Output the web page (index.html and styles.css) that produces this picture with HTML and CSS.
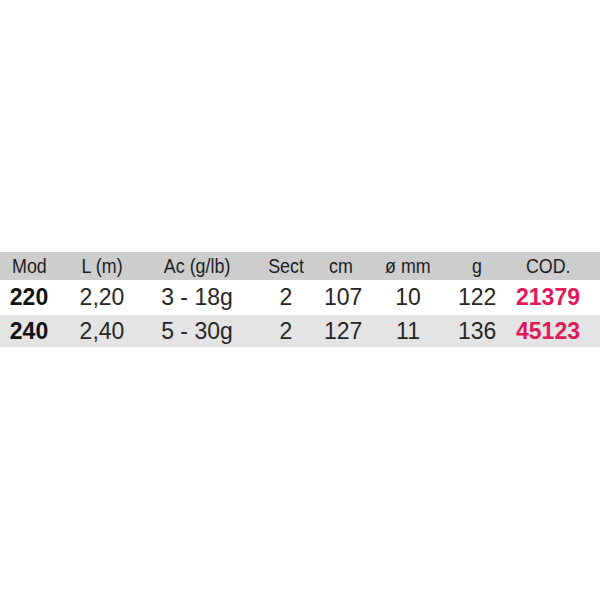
FILE: index.html
```html
<!DOCTYPE html>
<html>
<head>
<meta charset="utf-8">
<link rel="stylesheet" href="styles.css">
</head>
<body>
<div class="page">
  <div class="specs">
    <div class="row head">
      <span><i>Mod</i></span><span><i>L (m)</i></span><span><i>Ac (g/lb)</i></span><span><i>Sect</i></span><span><i>cm</i></span><span><i>ø mm</i></span><span><i>g</i></span><span><i>COD.</i></span>
    </div>
    <div class="row r1">
      <span class="mod">220</span><span>2,20</span><span>3 - 18g</span><span>2</span><span>107</span><span>10</span><span>122</span><span class="cod">21379</span>
    </div>
    <div class="row r2">
      <span class="mod">240</span><span>2,40</span><span>5 - 30g</span><span>2</span><span>127</span><span>11</span><span>136</span><span class="cod">45123</span>
    </div>
  </div>
</div>
</body>
</html>
```
FILE: styles.css
```css
html, body {
  margin: 0;
  padding: 0;
  background: #ffffff;
}
.page {
  width: 600px;
  height: 600px;
  padding-top: 252px;
  box-sizing: border-box;
}
.specs {
  width: 600px;
}
.row {
  display: grid;
  grid-template-columns: 58px 88px 102px 76px 34px 100px 38px 104px;
  align-items: center;
  text-align: center;
  white-space: nowrap;
}
.row span {
  display: block;
}
.head {
  height: 28px;
  background: #cdcdcd;
  color: #1e1e1e;
  font-family: "Liberation Sans", Arial, sans-serif;
  font-size: 21px;
}
.head i {
  display: inline-block;
  font-style: normal;
  transform: scaleX(0.85);
}
.r1, .r2 {
  font-family: "Liberation Sans", Arial, sans-serif;
  font-size: 23px;
  color: #262626;
}
.r1 {
  height: 35px;
  background: #ffffff;
}
.r2 {
  height: 32px;
  background: #e4e4e4;
}
.mod {
  font-weight: bold;
  color: #111111;
}
.cod {
  font-weight: bold;
  color: #e0195a;
}
```
